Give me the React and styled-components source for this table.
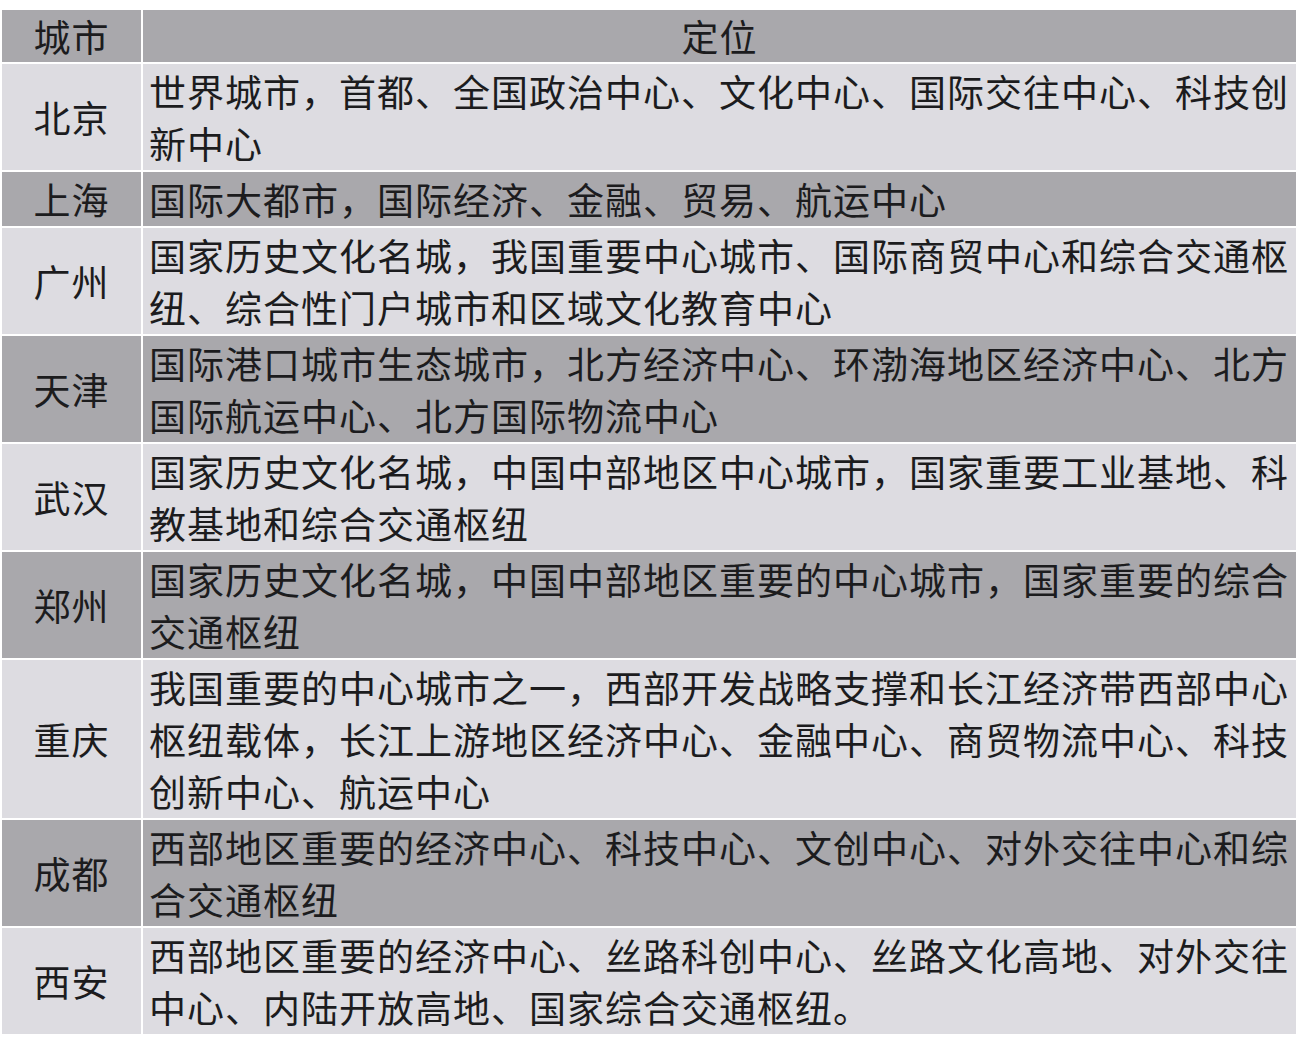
import styled, { createGlobalStyle } from "styled-components";

const rows = [
    { city: "北京", dark: false, lines: ["世界城市，首都、全国政治中心、文化中心、国际交往中心、科技创", "新中心"] },
    { city: "上海", dark: true, lines: ["国际大都市，国际经济、金融、贸易、航运中心"] },
    { city: "广州", dark: false, lines: ["国家历史文化名城，我国重要中心城市、国际商贸中心和综合交通枢", "纽、综合性门户城市和区域文化教育中心"] },
    { city: "天津", dark: true, lines: ["国际港口城市生态城市，北方经济中心、环渤海地区经济中心、北方", "国际航运中心、北方国际物流中心"] },
    { city: "武汉", dark: false, lines: ["国家历史文化名城，中国中部地区中心城市，国家重要工业基地、科", "教基地和综合交通枢纽"] },
    { city: "郑州", dark: true, lines: ["国家历史文化名城，中国中部地区重要的中心城市，国家重要的综合", "交通枢纽"] },
    { city: "重庆", dark: false, lines: ["我国重要的中心城市之一，西部开发战略支撑和长江经济带西部中心", "枢纽载体，长江上游地区经济中心、金融中心、商贸物流中心、科技", "创新中心、航运中心"] },
    { city: "成都", dark: true, lines: ["西部地区重要的经济中心、科技中心、文创中心、对外交往中心和综", "合交通枢纽"] },
    { city: "西安", dark: false, lines: ["西部地区重要的经济中心、丝路科创中心、丝路文化高地、对外交往", "中心、内陆开放高地、国家综合交通枢纽。"] },
];

export default function App() {
    return (
        <Page>
            <GlobalStyle />
            <Table>
                <Cell $dark $center>城市</Cell>
                <Cell $dark $center>定位</Cell>
                {rows.map((row) => (
                    <Row key={row.city} row={row} />
                ))}
            </Table>
        </Page>
    );
}

function Row({ row }) {
    return (
        <>
            <Cell $dark={row.dark} $center>{row.city}</Cell>
            <Cell $dark={row.dark}>
                {row.lines.map((line) => (
                    <Line key={line}>{line}</Line>
                ))}
            </Cell>
        </>
    );
}

const GlobalStyle = createGlobalStyle`
    body {
        margin: 0;
        background: #ffffff;
    }
`;

const Page = styled.div`
    width: 1302px;
    height: 1044px;
    padding: 10px 6px 0 2px;
    box-sizing: border-box;
    font-family: "Noto Sans CJK SC", "Noto Sans", sans-serif;
    color: #1c1c1e;
`;

const Table = styled.div`
    display: grid;
    grid-template-columns: 139px 1fr;
    gap: 2px;
`;

const Cell = styled.div`
    background: ${(p) => (p.$dark ? "#a9a8ac" : "#dddce1")};
    font-size: 37px;
    line-height: 52px;
    padding: ${(p) => (p.$center ? "0" : "1px 4px 1px 6px")};
    display: flex;
    flex-direction: column;
    justify-content: center;
    align-items: ${(p) => (p.$center ? "center" : "flex-start")};
    min-height: 51px;
    letter-spacing: 1px;
`;

const Line = styled.span`
    display: block;
    white-space: nowrap;
`;
